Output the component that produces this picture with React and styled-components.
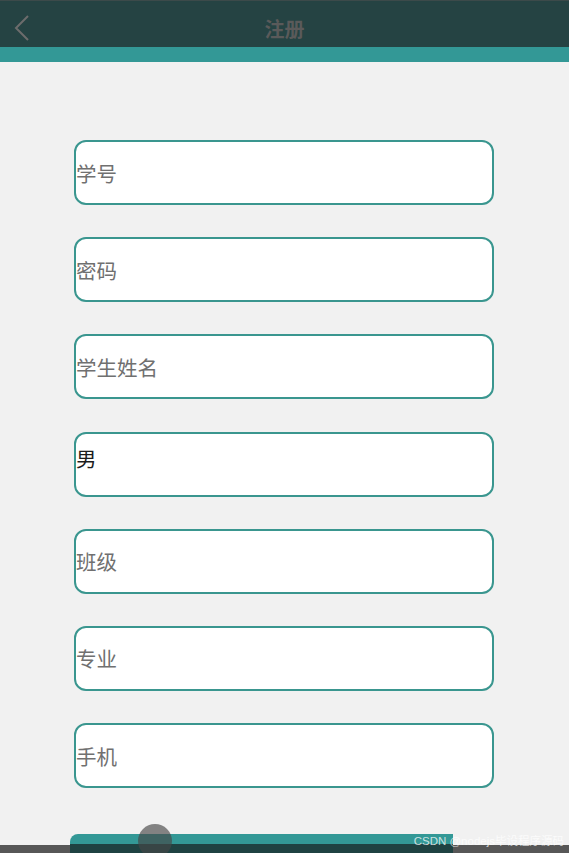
import styled, { createGlobalStyle } from "styled-components";

const Global = createGlobalStyle`
    html, body {
        margin: 0;
        padding: 0;
        background: #f1f1f1;
    }
    * {
        box-sizing: border-box;
    }
`;

const Page = styled.div`
    position: relative;
    height: 853px;
    overflow: hidden;
    background: #f1f1f1;
    font-family: "Noto Sans CJK SC", "Noto Sans", sans-serif;
`;

const Header = styled.header`
    display: grid;
    grid-template-columns: 1fr auto 1fr;
    align-items: center;
    height: 47px;
    padding: 8px 14px 0;
    background: #254343;
    border-top: 1px solid #3c4a4a;
`;

const BackButton = styled.button`
    justify-self: start;
    display: flex;
    padding: 0;
    background: none;
    border: 0;
`;

const Title = styled.h1`
    margin: 0;
    font-size: 20px;
    font-weight: 700;
    color: #5a5a5a;
`;

const Stripe = styled.div`
    height: 15px;
    background: #339896;
`;

const Form = styled.form`
    display: flex;
    flex-direction: column;
    gap: 32.2px;
    padding: 78px 75px 0 74px;
`;

const Field = styled.div`
    display: flex;
    align-items: ${({ $top }) => ($top ? "flex-start" : "center")};
    height: 65px;
    padding-top: ${({ $top }) => ($top ? "9px" : "0")};
    background: #fff;
    border: 2px solid #3a968f;
    border-radius: 12px;
    font-size: 20.5px;
    color: ${({ $filled }) => ($filled ? "#1c1c1c" : "#707070")};
`;

const Footer = styled.div`
    position: relative;
    height: 19px;
    margin-top: 46px;
    background: linear-gradient(transparent 11px, #575757 11px);
`;

const SubmitButton = styled.div`
    position: relative;
    width: 383px;
    height: 19px;
    margin-left: 70px;
    background: linear-gradient(#339896 10px, #1f4242 10px);
    border-top-left-radius: 8px;
`;

const Ripple = styled.span`
    position: absolute;
    left: 68px;
    top: -10px;
    width: 34px;
    height: 34px;
    border-radius: 50%;
    background: rgba(70, 70, 70, 0.65);
`;

const Watermark = styled.span`
    position: absolute;
    right: 5px;
    bottom: 5px;
    font-family: "Liberation Sans", "Noto Sans CJK SC", sans-serif;
    font-size: 11.5px;
    color: rgba(255, 255, 255, 0.75);
    white-space: nowrap;
`;

const fields = [
    { label: "学号" },
    { label: "密码" },
    { label: "学生姓名" },
    { label: "男", filled: true },
    { label: "班级" },
    { label: "专业" },
    { label: "手机" },
];

const App = () => (
    <Page>
        <Global />
        <Header>
            <BackButton aria-label="返回">
                <svg width="16" height="26" viewBox="0 0 16 26">
                    <path d="M14 1 L2 13 L14 25" fill="none" stroke="#6c6c6c" strokeWidth="2" />
                </svg>
            </BackButton>
            <Title>注册</Title>
        </Header>
        <Stripe />
        <Form>
            {fields.map(f => (
                <Field key={f.label} $filled={f.filled} $top={f.filled}>
                    {f.label}
                </Field>
            ))}
        </Form>
        <Footer>
            <SubmitButton>
                <Ripple />
            </SubmitButton>
            <Watermark>CSDN @nodejs毕设程序源码</Watermark>
        </Footer>
    </Page>
);

export default App;
